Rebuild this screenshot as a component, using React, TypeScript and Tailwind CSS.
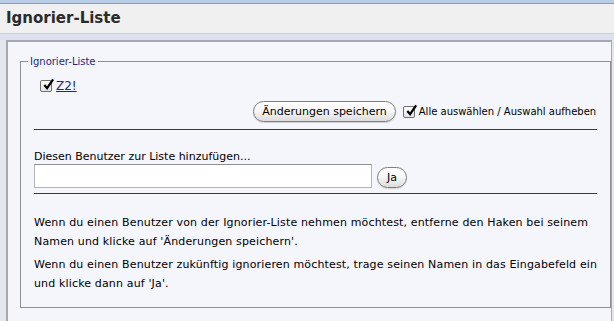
const Check = () => (
  <span className="relative inline-block w-[12px] h-[12px] border border-[#6f6f6f] rounded-[2px] bg-gradient-to-b from-white to-[#e4e4e4] shrink-0">
    <svg viewBox="0 0 14 14" className="absolute left-[1px] top-[-3px] w-[13px] h-[13px]">
      <path d="M2.5 7.5 L5.5 11 L12 1.5" fill="none" stroke="#000" strokeWidth="2.4" strokeLinejoin="miter" />
    </svg>
  </span>
);

const PillButton = ({ children, className = "" }: { children: React.ReactNode; className?: string }) => (
  <button
    type="button"
    className={`h-[21px] rounded-full border border-[#7d7d7d] bg-gradient-to-b from-white via-[#f6f6f6] to-[#dcdcdc] text-black leading-none shadow-[0_1px_1px_rgba(0,0,0,0.15)] ${className}`}
  >
    {children}
  </button>
);

export default function App() {
  return (
    <div className="min-h-[321px] w-[614px] overflow-hidden bg-[#e5e7ef] font-['DejaVu_Sans',sans-serif] text-black">
      <div className="h-[4px] bg-[#b9cde5] border-b border-[#8c9bb0]" />
      <div className="h-[30px] bg-[#f0f0f0] border-b border-[#cdd0d8] flex items-center px-[6px]">
        <h1 className="text-[15px] font-bold text-[#2b2b2b]">Ignorier-Liste</h1>
      </div>
      <div className="h-[6px] bg-[#dde0ee]" />
      <div className="ml-[6px] mr-[2px] border-l-2 border-t-2 border-r border-[#a7a8b0] bg-[#f5f5fc] pl-[12px] pr-[2px] pt-[13px] pb-[20px]">
        <fieldset className="border border-[#8e8f96]">
          <legend className="ml-[7px] px-[2px] text-[10px] leading-[13px] text-[#1d2a7a]">Ignorier-Liste</legend>
          <div className="px-[13px] pt-[11px] pb-[14px]">
            <div className="flex items-center gap-[4px] ml-[6px] h-[14px]">
              <Check />
              <a href="#" className="text-[12px] underline text-[#1d2a7a] leading-none">Z2!</a>
            </div>
            <div className="flex items-center justify-end gap-[7px] mt-[8px] pr-[1px]">
              <PillButton className="px-[8px] text-[11px]">Änderungen speichern</PillButton>
              <div className="flex items-center gap-[4px]">
                <Check />
                <span className="text-[10px]">Alle auswählen / Auswahl aufheben</span>
              </div>
            </div>
            <div className="mt-[7px] border-t border-[#3a3a3a]" />
            <div className="mt-[20px] text-[11px] leading-[14px]">Diesen Benutzer zur Liste hinzufügen...</div>
            <div className="flex items-center gap-[5px]">
              <input type="text" className="w-[338px] h-[24px] bg-white border border-[#b5b5b5] border-t-[#8f8f8f]" />
              <PillButton className="w-[30px] text-[11px] mt-[3px]">Ja</PillButton>
            </div>
            <div className="mt-[5px] border-t border-[#3a3a3a]" />
            <div className="mt-[19px] text-[11px] leading-[19px] tracking-[0.15px] whitespace-nowrap space-y-[4px]">
              <p>
                Wenn du einen Benutzer von der Ignorier-Liste nehmen möchtest, entferne den Haken bei seinem
                <br />
                Namen und klicke auf 'Änderungen speichern'.
              </p>
              <p>
                Wenn du einen Benutzer zukünftig ignorieren möchtest, trage seinen Namen in das Eingabefeld ein
                <br />
                und klicke dann auf 'Ja'.
              </p>
            </div>
          </div>
        </fieldset>
      </div>
    </div>
  );
}
